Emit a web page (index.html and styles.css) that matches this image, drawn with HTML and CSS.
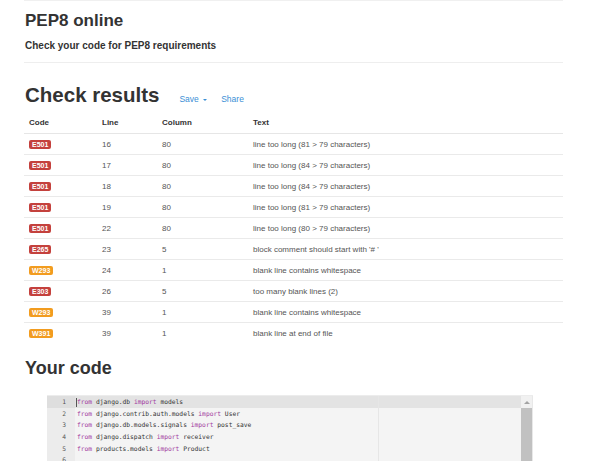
FILE: index.html
```html
<!DOCTYPE html>
<html>
<head>
<meta charset="utf-8">
<link rel="stylesheet" href="styles.css">
</head>
<body>
<div class="container">
  <div class="topline"></div>
  <h1 class="title">PEP8 online</h1>
  <p class="subtitle">Check your code for PEP8 requirements</p>
  <hr class="sep">
  <div class="results-head">
    <h2 class="big">Check results</h2>
    <a class="link">Save <span class="caret"></span></a>
    <a class="link">Share</a>
  </div>
  <table class="results">
    <thead>
      <tr><th class="c1">Code</th><th class="c2">Line</th><th class="c3">Column</th><th>Text</th></tr>
    </thead>
    <tbody>
      <tr><td><span class="badge err">E501</span></td><td>16</td><td>80</td><td>line too long (81 &gt; 79 characters)</td></tr>
      <tr><td><span class="badge err">E501</span></td><td>17</td><td>80</td><td>line too long (84 &gt; 79 characters)</td></tr>
      <tr><td><span class="badge err">E501</span></td><td>18</td><td>80</td><td>line too long (84 &gt; 79 characters)</td></tr>
      <tr><td><span class="badge err">E501</span></td><td>19</td><td>80</td><td>line too long (81 &gt; 79 characters)</td></tr>
      <tr><td><span class="badge err">E501</span></td><td>22</td><td>80</td><td>line too long (80 &gt; 79 characters)</td></tr>
      <tr><td><span class="badge err">E265</span></td><td>23</td><td>5</td><td>block comment should start with '# '</td></tr>
      <tr><td><span class="badge warn">W293</span></td><td>24</td><td>1</td><td>blank line contains whitespace</td></tr>
      <tr><td><span class="badge err">E303</span></td><td>26</td><td>5</td><td>too many blank lines (2)</td></tr>
      <tr><td><span class="badge warn">W293</span></td><td>39</td><td>1</td><td>blank line contains whitespace</td></tr>
      <tr><td><span class="badge warn">W391</span></td><td>39</td><td>1</td><td>blank line at end of file</td></tr>
    </tbody>
  </table>
  <h2 class="code-title">Your code</h2>
  <div class="editor">
    <div class="gutter">
      <div class="gl active">1</div>
      <div class="gl">2</div>
      <div class="gl">3</div>
      <div class="gl">4</div>
      <div class="gl">5</div>
      <div class="gl">6</div>
      <div class="gl">7</div>
    </div>
    <div class="code">
      <div class="print-margin"></div>
      <div class="ln active"><span class="cursor"></span><span class="kw">from</span> django.db <span class="kw">import</span> models</div>
      <div class="ln"><span class="kw">from</span> django.contrib.auth.models <span class="kw">import</span> User</div>
      <div class="ln"><span class="kw">from</span> django.db.models.signals <span class="kw">import</span> post_save</div>
      <div class="ln"><span class="kw">from</span> django.dispatch <span class="kw">import</span> receiver</div>
      <div class="ln"><span class="kw">from</span> products.models <span class="kw">import</span> Product</div>
      <div class="ln"></div>
      <div class="ln"></div>
    </div>
    <div class="scrollbar">
      <div class="arrow"><span class="tri"></span></div>
      <div class="thumb"></div>
    </div>
  </div>
</div>
</body>
</html>
```

FILE: styles.css
```css
html, body {
  margin: 0;
  padding: 0;
  background: #fff;
  overflow: hidden;
}
body {
  font-family: "Liberation Sans", Arial, sans-serif;
  color: #333;
}
.container {
  margin-left: 24px;
  width: 539px;
}
.topline {
  border-top: 1px solid #f0f0f0;
  height: 0;
}
.title {
  font-size: 17px;
  font-weight: bold;
  line-height: 20px;
  margin: 10px 0 0 1px;
  color: #333;
}
.subtitle {
  font-size: 10px;
  font-weight: bold;
  line-height: 14px;
  margin: 8px 0 0 1px;
  color: #333;
}
.sep {
  border: 0;
  border-top: 1px solid #eee;
  margin: 9px 0 0 0;
  height: 0;
}
.results-head {
  display: flex;
  align-items: baseline;
  margin-top: 19px;
  padding-left: 1px;
}
.big {
  font-size: 20.5px;
  font-weight: bold;
  line-height: 26px;
  margin: 0 20px 0 0;
  color: #333;
}
.link {
  font-size: 8.5px;
  color: #3a8fd6;
  margin-right: 14px;
}
.caret {
  display: inline-block;
  width: 0;
  height: 0;
  border-left: 2.5px solid transparent;
  border-right: 2.5px solid transparent;
  border-top: 2.5px solid #3a8fd6;
  vertical-align: middle;
  margin-left: 2px;
}
.results {
  width: 539px;
  border-collapse: collapse;
  margin-top: 4px;
  font-size: 8px;
}
.results th {
  text-align: left;
  font-weight: bold;
  color: #333;
  height: 21px;
  padding: 0 0 0 5px;
  border-bottom: 1.5px solid #e6e6e6;
}
.c1 { width: 68px; }
.c2 { width: 55px; }
.c3 { width: 86px; }
.results td {
  color: #555;
  height: 20px;
  padding: 0 0 0 5px;
  border-bottom: 1.2px solid #eaeaea;
}
.results tbody tr:last-child td {
  border-bottom: 0;
}
.badge {
  display: inline-block;
  font-size: 7px;
  font-weight: bold;
  color: #fff;
  padding: 0 3px;
  line-height: 9px;
  border-radius: 2px;
  vertical-align: middle;
}
.badge.err { background: #c4413d; }
.badge.warn { background: #f29c1f; }
.code-title {
  font-size: 18px;
  font-weight: bold;
  line-height: 22px;
  margin: 14px 0 0 1px;
  color: #333;
}
.editor {
  display: flex;
  margin: 16px 0 0 23px;
  width: 486px;
  height: 100px;
  background: #f4f4f4;
  border-top: 1px solid #ececec;
  position: relative;
}
.gutter {
  width: 28px;
  background: #ececec;
  font-family: "DejaVu Sans Mono", monospace;
  font-size: 6.3px;
  color: #555;
}
.gl {
  height: 11.7px;
  line-height: 11.7px;
  text-align: right;
  padding-right: 9px;
}
.gl.active {
  background: #dedede;
}
.code {
  flex: 1;
  position: relative;
  font-family: "DejaVu Sans Mono", monospace;
  font-size: 6.3px;
  color: #333;
}
.ln {
  height: 11.7px;
  line-height: 11.7px;
  padding-left: 2px;
  white-space: pre;
}
.ln.active {
  background: #e3e3e3;
}
.cursor {
  display: inline-block;
  width: 0;
  height: 9px;
  border-left: 1px solid #555;
  vertical-align: middle;
  margin-left: -1px;
}
.kw {
  color: #a23aa0;
}
.print-margin {
  position: absolute;
  left: 303px;
  top: 0;
  bottom: 0;
  border-left: 1px solid #e6e6e6;
}
.scrollbar {
  width: 11px;
  background: #f1f1f1;
  display: flex;
  flex-direction: column;
  border-right: 1px solid #e8e8e8;
}
.arrow {
  height: 12px;
  display: flex;
  align-items: center;
  justify-content: center;
}
.tri {
  width: 0;
  height: 0;
  border-left: 3px solid transparent;
  border-right: 3px solid transparent;
  border-bottom: 3px solid #a3a3a3;
}
.thumb {
  flex: 1;
  background: #c1c1c1;
}
```
